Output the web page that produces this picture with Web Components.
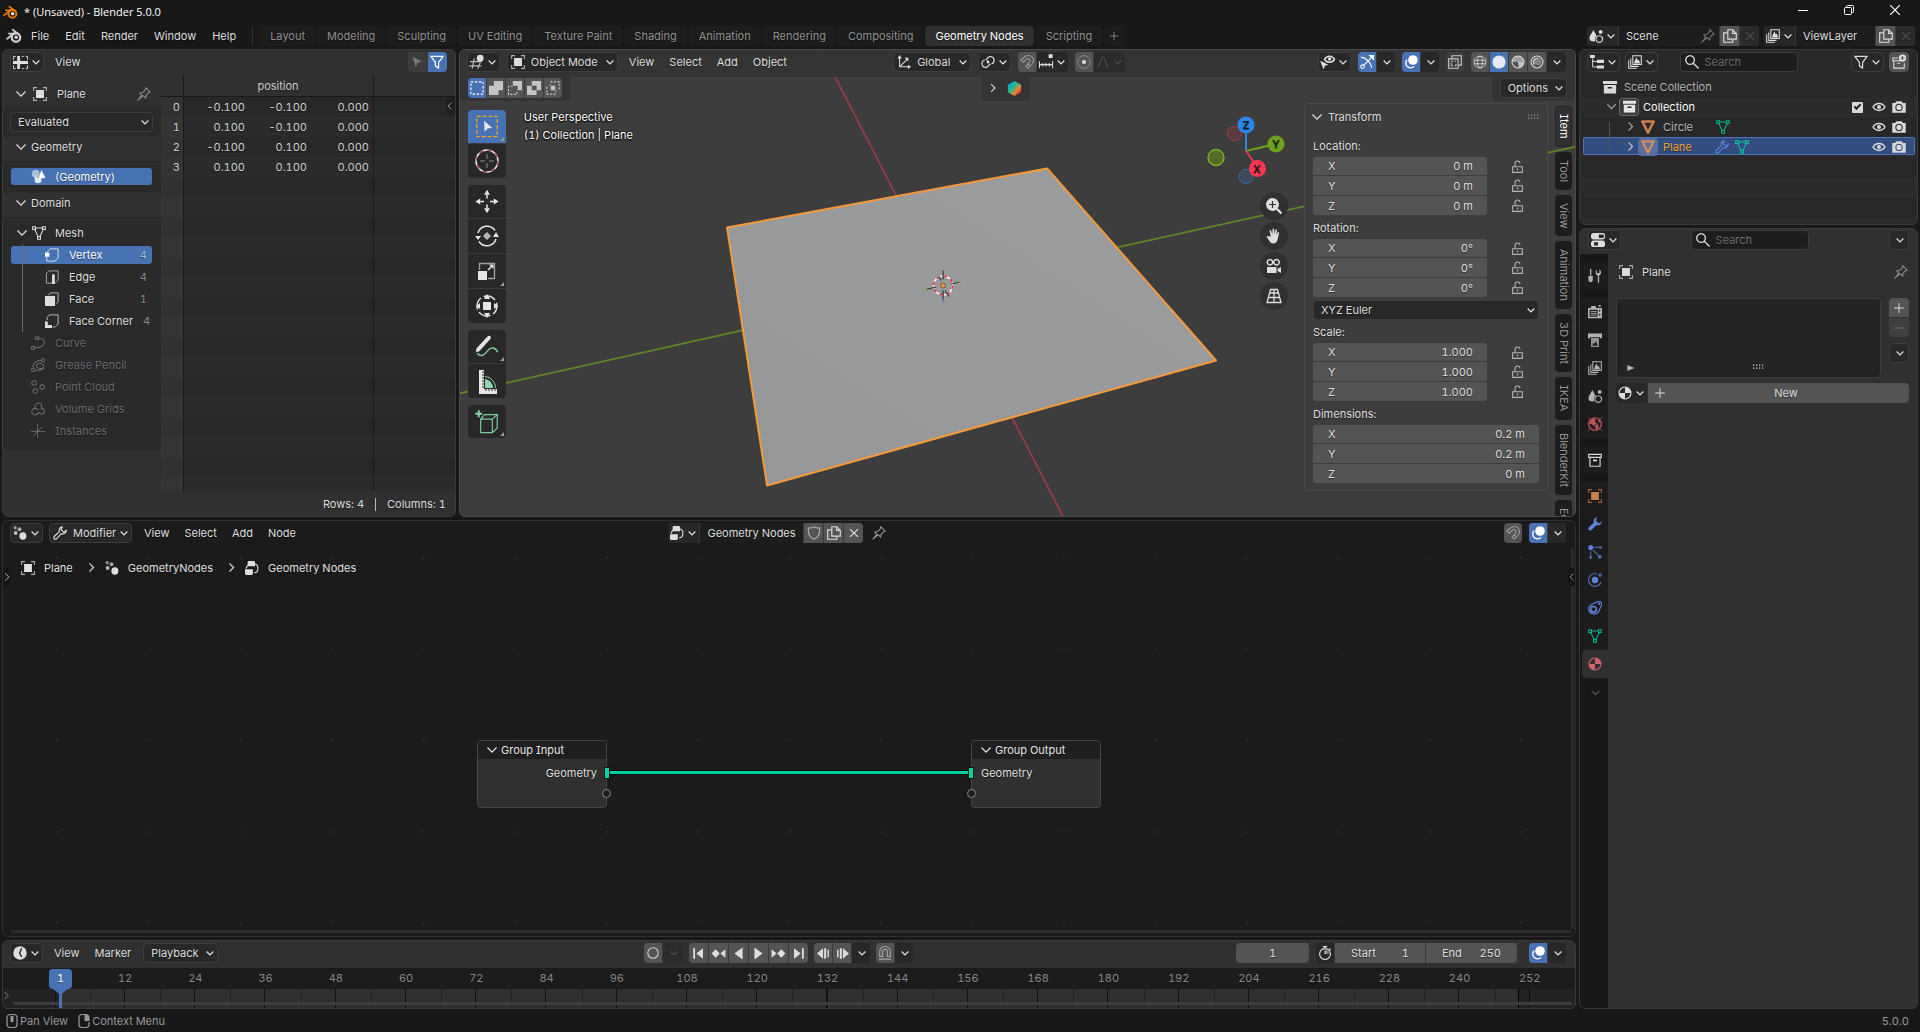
<!DOCTYPE html>
<html lang="en">
<head>
<meta charset="utf-8">
<title>* (Unsaved) - Blender 5.0.0</title>
<style>
html,body{margin:0;height:100%;background:#181818}
body{font:11px/16px Inter,"Liberation Sans",sans-serif;font-feature-settings:"tnum","cv08";color:#dedede;overflow:hidden}
</style>
</head>
<body>
<blender-window></blender-window>
<script>
const BASE = `
:host{display:block;box-sizing:border-box}
*,*::before,*::after{box-sizing:border-box}
button,input,select{font:inherit;font-feature-settings:inherit;color:inherit;margin:0;padding:0;border:0;background:none;outline:0;text-shadow:inherit}
a{color:inherit;text-decoration:none}
.grow{flex:1}
`;
const EDITOR = BASE + `
:host{display:flex;flex-direction:column;min-width:0;min-height:0;border:1px solid #3a3a3a;border-radius:6px;overflow:hidden;background:#303030;position:relative;text-shadow:0 1px 1px #0007}
header{display:flex;align-items:center;height:24px;flex:none;padding:0 8px 0 7px;position:relative}
.menus{display:flex;padding-left:12px;gap:15px}
`;
function define(name, css, html) {
  const tpl = document.createElement('template');
  customElements.define(name, class extends HTMLElement {
    connectedCallback() {
      if (this.shadowRoot) return;
      tpl.innerHTML = `<style>${css}</style>${typeof html === 'function' ? html(this) : html}`;
      this.attachShadow({mode:'open'}).append(tpl.content.cloneNode(true));
    }
  });
}

/* ---------- icons: 16 x 16 grid, drawn in currentColor ---------- */
const S = (d, w = 1.2, extra = '') => `<path d="${d}" fill="none" stroke="currentColor" stroke-width="${w}" ${extra}/>`;
const F = (d, extra = '') => `<path d="${d}" fill="currentColor" ${extra}/>`;
const DIAL = 'M8 1.2a6.8 6.8 0 1 0 0 13.6a6.8 6.8 0 1 0 0-13.6';
const ICONS = {
  blender: S('M1.2 10.8L8 5.2M3 5.6h6.5M6.8 1.8l6 4.6',1.8,'stroke-linecap="round"')+`<circle cx="10" cy="9.4" r="4.2" fill="none" stroke="currentColor" stroke-width="2.2"/><circle cx="10.2" cy="9.2" r="1.8" fill="var(--eye,currentColor)"/>`,
  down: S('M3.5 6l4.5 4.500 4.500-4.500',1.7),
  open: S('M3.5 5.5L8 10.2l4.500-4.700',1.2),
  right: S('M5.500 3l5 5-5 5',1.4),
  left: S('M10 3.5L5.500 8l4.500 4.500',1.3),
  plus: S('M8 1.500v13M1.500 8h13',1.3), minus: S('M3 8h10',1.2), cross: S('M3.500 3.500l9 9M12.500 3.500l-9 9',1.4),
  sheet: F('M4.500 1h3v14h-3zM0 6.500h16v3H0z')+S('M.5 5V1.500h2.500M9.500 1.500h2M13.500 1.500h2V5M.5 11v3.500h2.500M9.500 14.500h2M13.500 14.500h2V11',1),
  cursor: F('M3 2l10.500 5.500-5 1.500-2 5z'),
  funnel: S('M1 1.500h14L9.800 8.300v6.700l-3.600-2.500V8.300z',1.4,'stroke-linejoin="round"'),
  object: F('M3.500 3.500h9v9h-9z')+S('M.7 4.500V.7h3.800M11.500.7h3.800v3.800M15.300 11.500v3.800h-3.800M4.500 15.300H.7v-3.800',1.2,'opacity=".75"'),
  pin: S('M10 .8l5.200 5.200-2 .4-2.900 3.200-.3 3.200-3-3L1 15l4.500-5.500L3 6.800l3.600-.5 2.900-3.100z',1.2,'stroke-linejoin="round"'),
  geo: `<circle cx="5" cy="5" r="4.200" fill="currentColor" opacity=".55"/>`+F('M4 7.500c2 2 4 2 7 1v5c-1 2-6 2-7 0z','opacity=".85"')+F('M11 1l4.300 8c-1.500 1.300-6 1.300-7 0z'),
  mesh: S('M3.200 4l3.600 7.800M12.800 4l-3.600 7.800M4 2.300h8',1.2)+S('M.8.8h3.200v3.200H.8zM12 .8h3.200v3.200H12zM6.400 12h3.200v3.200H6.400z',1.3),
  vertex: S('M5.500 1h9.500v10.500L11.500 15h-9.500V10.500M2.500 4.500l3-3',1.1,'opacity=".8"')+F('M0 5h5v5H0z'),
  edge: S('M4.500 1H15v10.500L11.500 15H1.500V4z',1.1,'opacity=".7"')+F('M8 5h3.200v11H8z'),
  face: S('M4 3.500L6 1h9v10l-2 2.500',1.1,'opacity=".8"')+F('M0 4.500h11.500V16H0z'),
  corner: S('M2.500 7V4L5 1h10v10.500L11.500 15H9',1.1,'opacity=".8"')+F('M0 8.500h3.200v4h4.800V16H0z'),
  curve: S('M.8 12h3.200v3.200H.8zM5.500.8h3.200V4H5.500z',1.2)+S('M9 2.500c9 0 9 10.500-4.500 11',1.2),
  grease: S('M.8 12h3.200v3.200H.8zM12 .8h3.200V4H12z',1.1)+S('M2.500 11.500C1.500 5 8 2.500 12 2.500M4 13.700c11 2 13-6 8-7.500-4-1-7 2-5 4.500 2 2 7 2 8 1',1.2),
  points: S('M3.500.8a2.600 2.600 0 1 0 .01 0M12.800 5.500a2.600 2.600 0 1 0 .01 0M5 10a2.600 2.600 0 1 0 .01 0',1.3),
  cloud: S('M5 7a3.900 3.900 0 1 1 6.800 0c3.500 1 4.500 3 3 5.500-1.500 2-5 1-6-.5-1.500 3-5.500 3.500-7.500 1-1.200-2 .2-5.500 3.700-6M5 7c1 1.300 2.500 1.600 4 1',1.200),
  axes: S('M7.500 0v16M0 8.500h16M2.500 13.500L12.500 3.500',1.1),
  view3d: S('M0 7.500h13.500M-1 12.500H13M5 4L2.500 15.500M11.500 9l-2.500 6.500',1.4,'opacity=".8"')+`<circle cx="11.600" cy="3.600" r="3.900" fill="currentColor"/>`,
  orient: S('M3 2.500v11H13.500M3 13.500L12 4.500',1.200)+F('M.5 4L3 0l2.500 4zM12.500 11l3.500 2.500-3.500 2.500zM8.500 3H13v4.500z'),
  link: S('M6.800 4.500a4.300 4.300 0 1 1 5 5.800M9.200 11.500a4.300 4.300 0 1 1-5-5.800M6.800 4.500L5.400 6M9.200 11.500l1.400-1.500',1.400)+`<circle cx="8" cy="8" r="1.600" fill="currentColor"/>`,
  magnet: S('M1 5.500L6 1.800C12.500-2 18 4.500 14 10l-4.500 5.200-2.700-2.400L11 8C12.500 5 9.800 3.200 7.800 4.600L3.500 8.200zM9 10.200l2.700 2.300',1.3),
  snapinc: F('M11 -1h4.500v4.500H11z')+S('M.5 7v8M15.500 7v8M.5 11h15M4.300 9v4M8 9v4M11.700 9v4',1.200),
  prop: S('M8 .8a7.200 7.200 0 1 0 .01 0',1,'opacity=".45"')+`<circle cx="8" cy="8" r="2.400" fill="currentColor"/>`,
  falloff: S('M1 14c5 0 4-12 7-12s2 12 7 12',1.300),
  eyecur: S('M4 5c2.500-4.800 9-4.800 11.500 0-2.500 4.300-9 4.300-11.500 0z',1.600)+`<circle cx="9.800" cy="4.700" r="2" fill="currentColor"/>`+F('M-1 6.500l9.500 4.700-4 1-1.500 4.300z'),
  gizmo: S('M1 2.500c6 .5 11 5.500 12.500 12M4.300 11.800L13 3',1.3)+F('M9.500 0H16v6.500z')+S('M2.800 11.300a2 2 0 1 0 .01 0',1.2),
  overlay: `<circle cx="10.300" cy="5.700" r="5.500" fill="currentColor"/>`+S('M3.500 5.500A5.200 5.200 0 1 0 11.500 13',1.600),
  xray: S('M4.500 4V.8h10.700v10.700H12M.8 4.500h10.700v10.700H.8z',1.3)+S('M3.500 7.200H6M8 7.200h1.200M3.700 9v3.200H6M8 12.200h1.200v-2',1.1),
  wire: S(DIAL+'M1.500 6h13M1.500 10h13M8 1.200C4 4 4 12 8 14.800 12 12 12 4 8 1.200',1.1,'opacity=".85"'),
  solid: `<circle cx="8" cy="8" r="7.500" fill="currentColor" opacity=".85"/>`,
  matprev: S(DIAL,1.2)+F('M8 8V1.500A6.500 6.500 0 0 1 14.500 8zM8 8H1.500A6.500 6.500 0 0 1 8 1.500z','opacity=".55"')+F('M8 8h6.500A6.500 6.500 0 0 1 9 14.400z','opacity=".8"'),
  rendered: S(DIAL,1.2)+F('M8 3a5 5 0 0 1 4.500 7.500L11 12 4 10C2.500 6 5 3 8 3z','opacity=".35"')+S('M4.500 11c-2-4 1-7.500 4.500-7',1.3),
  material: S(DIAL,1.3)+F('M8 8V1.500A6.500 6.500 0 0 1 14.500 8zM8 8v6.500A6.500 6.500 0 0 1 1.500 8z'),
  selset: S('M1 1h14v14H1z',1.3,'stroke-dasharray="2.800 1.867"'),
  seladd: F('M5.500 0H16v10.500h-5V16H0V5.500h5.500z'), 
  selsub: F('M5.500 0H16v10.500h-5v-5H5.500z')+S('M5.500 6H.7v9.300h9.500V11',1.3,'stroke-dasharray="2.500 1.500"'),
  selxor: F('M5.500 0H16v10.500h-5V16H0V5.500h5.500zM5.500 5.500v5H11v-5z','fill-rule="evenodd"'),
  seland: F('M5.500 5.500h5v5h-5z')+S('M5 1h10v10M11 15H1V5',1.3,'stroke-dasharray="2.500 1.500"')+S('M3.500 4.500h2M10.500 11.500h2',1),
  scene: F('M5 1c2 4 4.500 6.500 4.500 9.500 0 5-9 5-9 0C.5 7.500 3 5 5 1z')+`<circle cx="13.300" cy="3.300" r="2.200" fill="currentColor"/>`+`<circle cx="11.700" cy="11.500" r="5" fill="var(--bg,#282828)"/>`+S('M11.700 7.700a3.800 3.800 0 1 0 .01 0',1.3),
  layers: S('M5.500.8h9.700v10H5.500zM3.200 4v9H12M.8 6v9.200H10',1.200)+F('M6.500 9.700l3-7 1.700 3.500 1-1 1.800 4.500z'),
  copy: S('M5.500.8H11l4.200 4.200v6.500H5.500zM11 .8V5h4.200',1.3)+S('M5 4.500H.8v10.700h10.400v-3',1.3),
  outliner: F('M0 0h5.500v3.500H0zM8 5.500h8V9H8zM8 12h8v3.500H8z')+S('M3 4v9.700h5M3 7.300h5',1.100),
  search: S('M5.800.8a5 5 0 1 0 .01 0M9.500 9.500l6 6',1.500),
  newcol: S('M7 3.500H1V6.500H10M2 6.500V15h12V9.500M6 9.500h3.500',1.200)+`<circle cx="12" cy="3.500" r="4.200" fill="currentColor"/>`+`<path d="M12 1.200v4.600M9.700 3.500h4.600" stroke="#545454" stroke-width="1.200"/>`,
  collection: F('M0 1h16v3.500H0zM1 5.700h14V15.500H1z')+`<path d="M5.500 8h5v1.800h-5z" fill="#282828"/>`,
  archive: S('M.8 1.500h14.400v3.500H.8zM2.200 5.500v9.700h11.600V5.500',1.3)+F('M5.700 7.500h4.600v2H5.700z'),
  eye: S('M1.200 8c3-5.500 10.600-5.500 13.600 0-3 5.200-10.600 5.200-13.600 0z',1.700)+`<circle cx="8" cy="8" r="2.300" fill="currentColor"/>`,
  camera: F('M.3 3.500h3.200L5 1.500h6l1.500 2h3.200v11H.3z')+`<circle cx="8" cy="8.500" r="3.600" fill="none" stroke="var(--bg,#282828)" stroke-width="1.200"/>`,
  tri: `<path d="M1.500 1.700h13L8 14.500z" fill="none" stroke="currentColor" stroke-width="2.900" stroke-linejoin="round"/>`,
  wrench: S('M10.700 1c-3.500.5-4.300 3.200-3.400 5.500L1.300 12c-1.300 2 .7 4 2.600 2.600L9.500 8.700c2.800.8 5.700-.5 5.900-4L12.300 7 9 4z',1.3,'stroke-linejoin="round"'),
  wrenchF: F('M10.500.3c-3.800.5-4.600 3.500-3.700 6L.7 12c-1.300 2.300 1.200 4.500 3 3L9.500 9.300c3.300.8 6-.5 6.300-4.800L12.500 7.300 8.800 4z'),
  props: `<rect x="0" y="0" width="16" height="7.300" rx="3" fill="currentColor"/><rect x="0" y="8.700" width="16" height="7.300" rx="3" fill="currentColor"/><path d="M9 1.700h4a1.500 1.500 0 0 1 0 4H9zM3.500 10.500H8v3.700H3.500z" fill="#282828"/>`,
  tools: F('M2.300 0h1.500v7.500H2.300zM.5 8h5v4c0 4-5 4-5 0zM11.200 7.500C8.300 6.300 7.800 2.500 10 .5v4h3V.5c2.700 1.300 2.600 5.500-.3 7v7.300c0 1.600-1.500 1.600-1.500 0z'),
  render: F('M0 3.500h3L4 1h4.500l1 2.500H16V15H0zM1.800 5.500v8H11v-8zM12.700 5.500v2.200H14V5.500zM12.700 10v2.200H14V10zM12 0h2.500v2H12z','fill-rule="evenodd"')+S('M3 7.500h7M3 9.500h7M3 11.500h7',1),
  output: F('M0 .5h16V6h-2.500V4.500h-11V6H0z')+F('M3.500 5.500h9V16h-9zM4.800 14.500h6.400L9 9.500 7.500 12.200 6.500 11z','fill-rule="evenodd" opacity=".8"'),
  world: S('M8 .8a7.200 7.200 0 1 0 .01 0',1.300)+F('M2 5.500l3.500-4 3.500 1-1.200 3.500 2.400 1-3.700 3.500-2-2.200L1 7.500zM9.500 8l3 1-1 3.500-2.500 2-1-3.500zM11.500 2.500l3 3-2.500 1z')+S('M0 .5l2.500 2.500M16 .5L13.500 3M0 15.500L2.500 13M16 15.500L13.500 13',1),
  particles: `<circle cx="3.200" cy="2.800" r="2.900" fill="currentColor"/><circle cx="14.200" cy="2.800" r="1.600" fill="currentColor" opacity=".7"/><circle cx="3" cy="14.200" r="1.700" fill="currentColor" opacity=".7"/><circle cx="13.500" cy="13.500" r="2.200" fill="currentColor" opacity=".8"/>`+S('M7 2.800h6M3 7v6M6 6l6.500 6.500',1.4,'opacity=".7"'),
  physics: `<circle cx="8" cy="8" r="3.600" fill="currentColor"/><circle cx="13.800" cy="2.300" r="2.100" fill="currentColor" opacity=".7"/>`+S('M10.500 1A7.300 7.300 0 1 0 12 14M12 14A7.300 7.300 0 0 0 15 10',1.200,'opacity=".8"'),
  constraint: S('M11 1c3-1.200 5.300 1 4.300 4l-3.200 7.200c-3 5-11.500 2.500-11.200-3.500.2-2.500 1.700-4 3.500-5z',1.4)+S('M6.300 6.200a3.300 3.300 0 1 0 .01 0',1.9)+`<circle cx="12.700" cy="3.300" r="1.200" fill="currentColor"/>`,
  modnodes: `<circle cx="2.500" cy="2" r="1.900" fill="currentColor" opacity=".6"/><circle cx="7.500" cy="3.700" r="2.200" fill="currentColor" opacity=".7"/><circle cx="3" cy="8" r="2.200" fill="currentColor" opacity=".8"/><ellipse cx="11.300" cy="11.500" rx="4" ry="4.300" fill="currentColor"/>`,
  nodetree: F('M4.500 0H10q1.500 0 1.500 1.500V6H3V1.500Q3 0 4.500 0zM0 9.500h9V14q0 2-1.500 2h-6Q0 16 0 14z')+S('M11.500 3.500c4.500 0 4.500 10-1 10M3 5L1 8.500',1.300),
  shield: S('M8 .8c2 1.200 4.500 1.700 6.500 1.700 0 7-1 10-6.500 12.700-5.500-2.700-6.500-5.700-6.500-12.700 2 0 4.500-.5 6.500-1.700z',1.4),
  clock: `<circle cx="8" cy="8" r="7.700" fill="currentColor"/><path d="M10 2.500L7.500 8l2.500 4.500" stroke="#282828" stroke-width="1.600" fill="none"/>`,
  rec: S('M8 2a6 6 0 1 0 .01 0',1.4,'opacity=".8"'),
  first: F('M1.500 1.500h2.300v13H1.500zM13.500 1.500v13L5.300 8z'), last: F('M12.200 1.500h2.300v13h-2.300zM2.500 1.500v13L10.700 8z'),
  prevkey: F('M9.500 8L4.500 2.800-.5 8l5 5.200zM16.500 2.800v10.400L10.300 8z'), nextkey: F('M6.500 8l5-5.200 5 5.200-5 5.200zM-.5 2.800v10.400L5.700 8z'),
  playrev: F('M13 .5v15L3 8z'), play: F('M3 .5v15L13 8z'),
  stepb: F('M7.500 1.500v13L0 8zM8.800 1.500h2.500v13H8.800zM13 3.500h1.700v9H13z'), stepf: F('M8.500 1.500v13L16 8zM4.700 1.500h2.500v13H4.700zM1.300 3.500H3v9H1.300z'),
  snap2: S('M2 12V6.500a6 6 0 0 1 12 0V12h-3.300V6.500a2.700 2.700 0 0 0-5.400 0V12z',1.2)+S('M1 15h14',1.2),
  stopwatch: S('M8 3a6.200 6.200 0 1 0 .01 0M5.500.7h5M8 .7V3M13 3l1.500 1.500M8 9V5.500',1.3)+F('M8 9V4.500A4.500 4.500 0 0 1 12.500 9z','opacity=".5"'),
  lock: S('M2 8.200h12v7H2zM5 8V4.500C5 .2 11 .2 11 4',1.3)+F('M7.200 10.500h1.600v2.200H7.200z'),
  mouseM: S('M3 4.500a3 3 0 0 1 3-3h4a3 3 0 0 1 3 3v7a3 3 0 0 1-3 3H6a3 3 0 0 1-3-3z',1.2)+F('M6.500 3h3v6h-3z'),
  mouseR: S('M10 1.500H6a3 3 0 0 0-3 3v7a3 3 0 0 0 3 3h4a3 3 0 0 0 3-3V9',1.2)+F('M8.500 1H10a3.500 3.500 0 0 1 3.500 3.500V8h-5z'),
  zoom: `<circle cx="6.500" cy="6.500" r="6.500" fill="currentColor"/><path d="M6.500 3v7M3 6.500h7" stroke="#303030" stroke-width="1.200"/>`+S('M10.500 10.500l5 5',2.300),
  hand: F('M4.800 8.500L3.600 3c-.2-1.300 1.200-1.500 1.500-.4L6.300 6.500 6.500 1.300c.1-1.200 1.600-1.200 1.700 0l.3 5 1-4.300c.3-1.100 1.700-.8 1.500.4l-.6 4.800 1.300-2.700c.6-1 1.700-.5 1.400.6L11.500 12c-.7 2.300-2 3.500-4 3.500-2.500 0-3.500-1.500-4.500-3.200L.8 9.300c-.5-1 .5-1.700 1.400-1z'),
  cam: F('M1 9h9.500v6H1zM11.500 11L15 9v6l-3.500-2z')+S('M4 1.500a2.700 2.700 0 1 0 .01 0M10.500 1.500a2.700 2.700 0 1 0 .01 0',1.500),
  persp: S('M4.500 1.500h7L15 14.500H1zM8 1.500v13M3.700 5h8.600M2.500 9.500h11',1.3),
  grip: F('M3 5.500h1.200v1.200H3zM6 5.500h1.200v1.200H6zM9 5.500h1.200v1.200H9zM12 5.500h1.200v1.200H12zM3 8.500h1.200v1.200H3zM6 8.500h1.200v1.200H6zM9 8.500h1.200v1.200H9zM12 8.500h1.200v1.200H12z'),
  play2: F('M5 4.500v7L13 8z'),
  hex: `<defs><linearGradient id="h" x1="0" y1="0" x2="1" y2="1"><stop offset=".1" stop-color="#1aa3e8"/><stop offset=".4" stop-color="#19b98f"/><stop offset=".65" stop-color="#e08a3c"/><stop offset=".9" stop-color="#e81b1b"/></linearGradient></defs><path d="M8 0l7 4v8l-7 4-7-4V4z" fill="url(#h)"/>`
};
define('bl-icon', `:host{display:inline-flex;flex:none;width:var(--size,16px);height:var(--size,16px)}svg{width:100%;height:100%;overflow:visible}`,
  el => `<svg viewBox="0 0 16 16" aria-hidden="true">${ICONS[el.getAttribute('name')] || ''}</svg>`);
const ic = (n, st = '') => `<bl-icon name="${n}" style="--size:14px;${st}"></bl-icon>`;

/* ---------- controls ---------- */
define('bl-button', BASE + `
:host{display:inline-flex;flex:none}
button{display:flex;align-items:center;justify-content:center;gap:2px;height:20px;min-width:20px;padding:0 2px;background:#282828;border:1px solid #3d3d3d;border-radius:4px;white-space:nowrap}
.text{padding:0 3px 0 5px}
.chev{--size:12px;margin-right:-1px}
:host([flat]) button{border:0;border-radius:0;width:var(--w,18px);min-width:0;padding:0}
:host([flat][menu][icon]) button{width:31px}
:host([tone=grey]) button{background:#545454;border-color:#545454}
:host([tone=blue]) button{background:#4772b3;color:#fff}
:host([tone=dim]) button{background:#2b2b2b;color:#4c4c4c}
:host([tone=half]) button{background:#3d3d3d}
`, el => {
  const i = el.getAttribute('icon'), m = el.hasAttribute('menu'), t = el.textContent.trim();
  return `<button type="button" aria-label="${el.getAttribute('label') || t}">${i ? `<bl-icon name="${i}" style="--size:${el.getAttribute('isize') || 14}px"></bl-icon>` : ''}${t ? `<span class="text"><slot></slot></span>` : ''}${m ? '<bl-icon class="chev" name="down"></bl-icon>' : ''}</button>`;
});
define('bl-group', `:host{display:inline-flex;flex:none;gap:1px;height:20px;border-radius:4px;overflow:hidden;background:#3a3a3a}`, '<slot></slot>');
define('bl-select', BASE + `
:host{display:inline-flex;flex:none}
label{display:flex;flex:1;align-items:center;height:20px;background:#282828;border:1px solid #3d3d3d;border-radius:4px;padding:0 1px 0 3px;position:relative}
select{appearance:none;flex:1;height:18px;padding:0 18px 0 4px}
bl-icon+select{padding-left:6px}
:host([tight]) select{padding-right:13px}
option{background:#282828}
.c{--size:12px;position:absolute;right:1px;pointer-events:none}
`, el => `<label>${el.hasAttribute('icon') ? ic(el.getAttribute('icon')) : ''}<select aria-label="${el.getAttribute('label')}"><option>${el.getAttribute('value')}</option></select><bl-icon class="c" name="down"></bl-icon></label>`);
define('bl-search', BASE + `
:host{display:inline-flex;flex:none}
label{display:flex;align-items:center;width:118px;height:20px;background:#1d1d1d;border:1px solid #3d3d3d;border-radius:4px;padding-left:4px;gap:6px}
input{width:80px;height:18px}input::placeholder{color:#6e6e6e;opacity:1}
`, `<label>${ic('search')}<input type="search" placeholder="Search" aria-label="Search"></label>`);

/* A stack of labelled number fields, with an optional lock beside each. */
define('bl-vector', BASE + `
:host{display:flex;flex-direction:column}
h4{font:inherit;margin:0;line-height:20px;height:21px}
.line{display:flex;align-items:center;height:19px;margin-bottom:1px}
.line:nth-of-type(1){height:18px}
.line:last-child{margin-bottom:0}
label{flex:1;display:flex;align-items:center;height:100%;background:#545454;padding:0 14px 0 15px}
.line:nth-of-type(1) label{border-radius:4px 4px 0 0}.line:last-child label{border-radius:0 0 4px 4px}
input{flex:1;min-width:0;width:20px;text-align:right;height:18px}
button{width:14px;height:18px;margin:0 14px 0 24px;color:#b4b4b4;display:flex;align-items:center}
`, el => `<h4>${el.getAttribute('label')}:</h4>` + el.getAttribute('values').split(',').map((v, i) =>
  `<div class="line"><label><span>${'XYZ'[i]}</span><input value="${v}"></label>${el.hasAttribute('locks') ? `<button type="button" aria-label="Lock ${'XYZ'[i]}">${ic('lock','--size:13px')}</button>` : ''}</div>`).join(''));

/* ---------- window chrome ---------- */
define('title-bar', BASE + `
:host{display:flex;align-items:center;height:24px;padding:0 14px 0 3px;font:11px/16px "Open Sans","Noto Sans",sans-serif;color:#fff}
.logo{--size:15px;color:#ea7600;--eye:#fff;margin-right:6px}
button{width:46px;height:20px;display:flex;align-items:center;justify-content:center}
nav{display:flex;margin-right:-12px;margin-top:-4px}
`, `<bl-icon class="logo" name="blender"></bl-icon><span>* (Unsaved) - Blender 5.0.0</span><span class="grow"></span>
<nav><button aria-label="Minimize"><svg width="10" height="10"><path d="M0 5.500h10" stroke="#fff"/></svg></button>
<button aria-label="Restore"><svg width="10" height="10" fill="none" stroke="#fff"><rect x=".5" y="2.500" width="7" height="7" rx="1"/><path d="M2.500 2.500V1.500q0-1 1-1h5q1 0 1 1v5q0 1-1 1h-1"/></svg></button>
<button aria-label="Close"><svg width="10" height="10"><path d="M0 0l10 10M10 0L0 10" stroke="#fff" stroke-width="1.200"/></svg></button></nav>`);

define('top-bar', BASE + `
:host{display:flex;align-items:center;height:25px;padding:0 5px 1px 6px;text-shadow:0 1px 1px #0007}
.logo{--size:16px;color:#d0d0d0;margin-right:9px}
.menus{display:flex;gap:16px}
hr{width:1px;height:20px;border:0;background:#303030;margin:0 7px 0 16px}
.tabs{display:flex;gap:2px}
.tabs button{height:20px;padding:0 10px;border-radius:4px;background:#1c1c1c;color:#8f8f8f;text-shadow:inherit}
.tabs button[aria-selected=true]{background:#303030;color:#fff}
.tabs .add{padding:0 5px;display:flex;align-items:center}
.id{margin-left:5px}
.name{display:flex;align-items:center;background:#1d1d1d;padding:0 4px 0 7px;--bg:#1d1d1d}
.name input{width:75px}.name.s input{width:68px}
bl-icon{color:#d9d9d9}
`, `<bl-icon class="logo" name="blender"></bl-icon>
<nav class="menus">${['File','Edit','Render','Window','Help'].map(t => `<a href="#">${t}</a>`).join('')}</nav><hr>
<div class="tabs" role="tablist">${['Layout','Modeling','Sculpting','UV Editing','Texture Paint','Shading','Animation','Rendering','Compositing','Geometry Nodes','Scripting'].map(t => `<button role="tab" aria-selected="${t === 'Geometry Nodes'}">${t}</button>`).join('')}<button class="add" aria-label="Add workspace">${ic('plus','color:#8f8f8f;--size:10px')}</button></div>
<span class="grow"></span>
<bl-group class="id"><bl-button flat icon="scene" menu label="Scene"></bl-button><span class="name"><input value="Scene" aria-label="Scene name">${ic('pin','color:#777')}</span><bl-button flat tone="grey" icon="copy" label="New scene" style="--w:19px"></bl-button><bl-button flat tone="dim" icon="cross" label="Remove scene" style="--w:19px"></bl-button></bl-group>
<bl-group class="id"><bl-button flat icon="layers" menu label="View layer"></bl-button><span class="name s"><input value="ViewLayer" aria-label="View layer name"></span><bl-button flat tone="grey" icon="copy" label="New view layer" style="--w:19px"></bl-button><bl-button flat tone="dim" icon="cross" label="Remove view layer" style="--w:19px"></bl-button></bl-group>`);

define('status-bar', BASE + `
:host{display:flex;align-items:center;height:23px;padding:0 11px 0 4px;color:#999}
bl-icon{color:#999}.b{margin-left:8px}
`, `<bl-icon name="mouseM"></bl-icon><span>Pan View</span><bl-icon class="b" name="mouseR"></bl-icon><span>Context Menu</span><span class="grow"></span><span>5.0.0</span>`);

/* ---------- spreadsheet ---------- */
const tree = [['vertex','Vertex',4],['edge','Edge',4],['face','Face',1],['corner','Face Corner',4]];
const off = [['curve','Curve'],['grease','Grease Pencil'],['points','Point Cloud'],['cloud','Volume Grids'],['axes','Instances']];
const verts = [['-0.100','-0.100','0.000'],['0.100','-0.100','0.000'],['-0.100','0.100','0.000'],['0.100','0.100','0.000']];
define('spreadsheet-editor', EDITOR + `
header{height:25px;padding-bottom:1px}
header .menus{padding-left:11px}
main{flex:1;display:flex;min-height:0}
aside{width:158px;flex:none}
.head{height:24px;display:flex;align-items:center;gap:2px;padding:0 10px 4px;width:100%;text-align:left}
.head.top{height:32px;padding:5px 10px 0;gap:10px}
.body{background:#2a2a2a;padding:5px 8px 5px 7px;display:flex;flex-direction:column}
.geo{margin:2px 1px 3px;height:17px;border-radius:3px;background:#4772b3;color:#fff;display:flex;align-items:center;gap:9px;padding-left:20px}
.item{display:flex;align-items:center;gap:10px;height:18px;margin:2px 1px;border-radius:3px;white-space:nowrap}
.tree{border-radius:0 0 4px 4px;padding-bottom:8px}
.sub,.off{display:flex;flex-direction:column}
.sub{position:relative}
.sub::before{content:"";position:absolute;left:12px;top:0;bottom:0;width:1px;background:#6a6a6a}
.sub .item{padding-left:34px}
.sub .item b{font-weight:400;margin-left:auto;padding-right:5px;color:#8a8a8a}
.sub .on{background:#4772b3;color:#fff}.sub .on b{color:#aabbdb}
.off .item{padding-left:20px;color:#6b6b6b}
.sheet{flex:1;display:flex;flex-direction:column;position:relative;min-width:0}
.grid{flex:1;background:linear-gradient(90deg,#ffffff0c 22px,#1a1a1a 22px 23px,#0000 23px 212px,#1a1a1a 212px 213px,#0000 213px),repeating-linear-gradient(#282828 0 20px,#2b2b2b 20px 40px);background-position:0 0,0 22px}
table{border-collapse:collapse;table-layout:fixed;width:212px;text-align:right;line-height:20px;color:#cfcfcf;position:relative}
th{font-weight:400;padding:0}td{padding:0;height:20px}
tbody th{padding-right:3px}
tbody td:last-child{padding-right:4px}
thead tr{height:22px}thead th:last-child{text-align:center}
.bar{position:absolute;left:0;right:0;top:0;height:22px;background:#303030;border-bottom:1px solid #1a1a1a}
.bar::before{content:"";position:absolute;inset:0;background:linear-gradient(90deg,#0000 22px,#1a1a1a 22px 23px,#0000 23px 212px,#1a1a1a 212px 213px,#0000 213px)}
.peek{position:absolute;right:0;top:22px;width:9px;height:18px;background:#1f1f1f;border-radius:4px 0 0 4px;display:flex;align-items:center;justify-content:center;color:#999}
footer{height:25px;display:flex;align-items:center;justify-content:flex-end;padding:2px 9px 0 0;flex:none}
footer i{width:1px;height:13px;background:#bbb;margin:0 11px}
`, `<header><bl-button icon="sheet" isize="15" menu label="Editor type"></bl-button><nav class="menus"><a href="#">View</a></nav><span class="grow"></span>
<bl-group><bl-button flat tone="half" icon="cursor" label="Selected only" style="--w:19px;color:#777"></bl-button><bl-button flat tone="blue" icon="funnel" label="Filter" style="--w:19px"></bl-button></bl-group></header>
<main><aside>
<div class="head top">${ic('open','--size:16px;margin-right:-6px')}${ic('object')}<span>Plane</span><span class="grow"></span>${ic('pin','color:#8f8f8f')}</div>
<div class="body"><bl-select label="Evaluation state" value="Evaluated"></bl-select></div>
<button class="head">${ic('open','--size:16px')}<span>Geometry</span></button>
<div class="body"><button class="geo">${ic('geo','--size:15px')}<span>(Geometry)</span></button></div>
<button class="head">${ic('open','--size:16px')}<span>Domain</span></button>
<div class="body tree"><button class="item" style="gap:2px;padding-left:3px">${ic('open','--size:16px')}${ic('mesh','margin-right:7px')}<span>Mesh</span></button>
<div class="sub">${tree.map(([i,t,n],k) => `<button class="item ${k ? '' : 'on'}">${ic(i)}<span>${t}</span><b>${n}</b></button>`).join('')}</div>
<div class="off">${off.map(([i,t]) => `<button class="item">${ic(i)}<span>${t}</span></button>`).join('')}</div></div>
</aside>
<div class="sheet"><div class="grid"><div class="bar"></div><table><colgroup><col style="width:22px"><col style="width:62px"><col style="width:62px"><col style="width:66px"></colgroup>
<thead><tr><th></th><th colspan="3">position</th></tr></thead>
<tbody>${verts.map((r,i) => `<tr><th>${i}</th>${r.map(c => `<td>${c}</td>`).join('')}</tr>`).join('')}</tbody></table></div>
<button class="peek" aria-label="Show sidebar">${ic('left','--size:12px')}</button>
<footer><span>Rows: 4</span><i></i><span>Columns: 1</span></footer></div></main>`);

/* ---------- 3D viewport ---------- */
const TOOLS = {
  select: '<rect x="6.500" y="6.500" width="21" height="21" fill="none" stroke="#f5a623" stroke-width="1.300" stroke-dasharray="4 2"/><path d="M14 11l8.500 7.500-5 .5-3 3.500z" fill="#e6e6e6"/>',
  cursor: '<circle cx="17" cy="17" r="11" fill="none" stroke="#e6e6e6" stroke-width="1.500"/><circle cx="17" cy="17" r="11" fill="none" stroke="#a3464a" stroke-width="1.500" stroke-dasharray="4.320 4.320"/><path d="M17 10v5M17 19v5M10 17h5M19 17h5" stroke="#8c8c8c"/>',
  move: '<path d="M17 5l3 5h-6zM17 29l3-5h-6zM5 17l5-3v6zM29 17l-5-3v6z" fill="#e6e6e6"/><path d="M17 10v4M17 20v4M10 17h4M20 17h4" stroke="#e6e6e6" stroke-width="1.600"/>',
  rotate: '<path d="M8 14a9.500 9.500 0 0 1 17-2.500M26 20a9.500 9.500 0 0 1-17 2.500" fill="none" stroke="#e6e6e6" stroke-width="1.500"/><path d="M5 17h6l-3 4zM23 18h6l-3-5z" fill="#e6e6e6"/><path d="M17 13l4 4-4 4-4-4z" fill="#b5b5b5"/>',
  scale: '<path d="M9.500 16V9.500h15v15H18" fill="none" stroke="#a0a0a0" stroke-width="1.300"/><path d="M8 17h9v9H8z" fill="#e6e6e6"/><path d="M18 16l4-4" stroke="#e6e6e6" stroke-width="1.500"/><path d="M19 10.500h4.500V15z" fill="#e6e6e6"/>',
  transform: '<circle cx="17" cy="17" r="10" fill="none" stroke="#e6e6e6" stroke-width="1.400" stroke-dasharray="9 3 3.700 0"/><path d="M13 13h8v8h-8zM17 5l3 5h-6zM17 29l3-5h-6zM6 17l4-3v6zM28 17l-4-3v6z" fill="#e6e6e6"/>',
  annotate: '<path d="M8 20L19 8" stroke="#e6e6e6" stroke-width="4" stroke-linecap="round"/><path d="M5.500 23l1-4 3 2.500z" fill="#e6e6e6"/><path d="M7 24c4 5 8 1 11-3s8-3 10 2" fill="none" stroke="#7fc9a0" stroke-width="1.500"/>',
  measure: '<path d="M9 6h5v19h13v5H9z" fill="#e6e6e6"/><path d="M12 8h2M12 11h2M12 14h2M12 17h2M12 20h2M12 23h2M16 27v-2M19 27v-2M22 27v-2M25 27v-2" stroke="#282828"/><path d="M15 15a9 9 0 0 1 8 9h-8z" fill="#8ed7b0"/><path d="M15 12.500a11.500 11.500 0 0 1 10.500 11.500" stroke="#8ed7b0" fill="none"/>',
  cube: '<path d="M10.500 14.500h12v14h-12zM10.500 14.500l4-4.500h13l-5 4.500M27.500 10v14l-5 4.500" fill="none" stroke="#7fc9a0" stroke-width="1.200"/><path d="M8.500 5.500v7M5 9h7" stroke="#8ed7b0" stroke-width="2"/>'
};
define('tool-button', BASE + `
button{display:block;width:38px;height:34px;background:#282828;position:relative;overflow:hidden}
:host(:first-child) button{height:33px}
:host([on]) button{background:#4772b3}
:host([more]) button::after{content:"";position:absolute;right:2px;bottom:2px;border:2px solid;border-color:#0000 #999 #999 #0000}
svg{width:34px;height:100%;margin:0 2px;display:block}
`, el => `<button type="button" aria-label="${el.getAttribute('tool')}"><svg viewBox="0 0 34 34">${TOOLS[el.getAttribute('tool')]}</svg></button>`);

define('transform-panel', BASE + `
:host{width:244px;border:1px solid #4a4a4a;border-radius:4px;background:#3d3d3d;padding:0 8px 7px}
.t{display:flex;align-items:center;gap:3px;height:25px;width:100%;margin-bottom:7px;margin-left:-4px;text-align:left}
.t .g{margin-left:auto;color:#999;margin-right:-6px}
bl-vector{margin-bottom:3px}
bl-select{display:flex;margin-bottom:2px}
`, `<button class="t">${ic('open','--size:16px')}<span>Transform</span><bl-icon class="g" name="grip"></bl-icon></button>
<bl-vector label="Location" values="0 m,0 m,0 m" locks></bl-vector>
<bl-vector label="Rotation" values="0°,0°,0°" locks></bl-vector>
<bl-select label="Rotation mode" value="XYZ Euler"></bl-select>
<bl-vector label="Scale" values="1.000,1.000,1.000" locks></bl-vector>
<bl-vector label="Dimensions" values="0.2 m,0.2 m,0 m" style="margin-bottom:0"></bl-vector>`);

define('viewport-editor', EDITOR + `
:host{background:#3d3d3d;border-color:#4a4a4a}
.scene{position:absolute;inset:0;width:100%;height:100%}
header{height:27px;padding:0 9px 3px 7px;background:#333333d8;gap:7px}
header .menus{padding-left:4px;gap:15px}
.sp1{flex:100}.sp2{flex:194}
.strip{display:flex;position:relative;height:24px}
.strip>div{background:#333333d8;display:flex;align-items:center;border-radius:0 0 4px 4px;padding:0 8px 2px}
.strip .m{width:48px;justify-content:flex-end;gap:8px}
.s1{flex:412}.s2{flex:462}
.work{display:flex;position:relative;flex:1;min-height:0}
.tools{display:flex;flex-direction:column;gap:7px;margin:9px 18px 0 8px}
.tools div{display:flex;flex-direction:column;gap:1px;border-radius:4px;overflow:hidden;background:#3a3a3a}
.info{margin-top:7px;line-height:18px;color:#fff;text-shadow:0 0 2px #000,0 1px 2px #000}
.nav{display:flex;flex-direction:column;align-items:flex-end;gap:2px;margin:8px 16px 0 0}
.nav button{width:28px;height:28px;border-radius:50%;background:#303030;display:flex;align-items:center;justify-content:center}
.nav svg{margin-bottom:1px}
transform-panel{align-self:flex-start;margin-top:2px;flex:none}
.tabs{display:flex;flex-direction:column;gap:5px;margin:5px 3px 0 7px;overflow:hidden}
.tabs button{writing-mode:vertical-rl;width:17px;padding:8px 0;background:#1d1d1d;color:#999;border-radius:4px;flex:none;line-height:17px}
.tabs button.on{background:#303030;color:#fff;box-shadow:inset 0 0 0 1px #242424}
`, `<svg class="scene" viewBox="460 50 1115 467" preserveAspectRatio="xMidYMid slice"><defs><linearGradient id="p" x1="0" y1="1" x2="1" y2="0"><stop stop-color="#949698"/><stop offset="1" stop-color="#9c9d9f"/></linearGradient></defs>
<path d="M459 394L742 331M1117 248L1576 147" stroke="#5f8524" stroke-width="1.800"/><path d="M821 50L896 196M1012 418L1063 517" stroke="#993a48" stroke-width="1.800"/>
<path d="M1047 169L727 228 767 486 1216 361z" fill="url(#p)" stroke="#f5993a" stroke-width="2" stroke-linejoin="round"/>
<circle cx="943" cy="286" r="9.500" fill="none" stroke="#fff" stroke-width="1.500"/><circle cx="943" cy="286" r="9.500" fill="none" stroke="#e8303c" stroke-width="1.500" stroke-dasharray="3.730 3.730"/>
<path d="M943 271v9M943 291v9M926 290l10-2.500M951 284.500l9-2M939 277l2 4M945 291l4 6" stroke="#333" stroke-width="1.200"/><path d="M924 290.500l3-.7M958 282.800l3-.7" stroke="#6fb51b"/><path d="M943 300v3" stroke="#4a80d0"/><circle cx="943" cy="286" r="2.500" fill="#f5993a" stroke="#333" stroke-width=".6"/></svg>
<header><bl-button icon="view3d" menu label="Editor type"></bl-button><bl-select icon="object" label="Mode" value="Object Mode"></bl-select><nav class="menus"><a href="#">View</a><a href="#">Select</a><a href="#">Add</a><a href="#">Object</a></nav><span class="sp1"></span>
<bl-select icon="orient" label="Transform orientation" value="Global"></bl-select><bl-button icon="link" menu label="Pivot point"></bl-button>
<bl-group><bl-button flat tone="grey" icon="magnet" label="Snap" style="color:#999"></bl-button><bl-button flat icon="snapinc" menu label="Snap to"></bl-button></bl-group>
<bl-group><bl-button flat tone="grey" icon="prop" label="Proportional editing"></bl-button><bl-button flat tone="dim" icon="falloff" menu label="Falloff"></bl-button></bl-group>
<span class="sp2"></span><bl-button icon="eyecur" menu label="Visibility"></bl-button>
<bl-group><bl-button flat tone="blue" icon="gizmo" label="Gizmos"></bl-button><bl-button flat menu label="Gizmo settings"></bl-button></bl-group>
<bl-group><bl-button flat tone="blue" icon="overlay" label="Overlays"></bl-button><bl-button flat menu label="Overlay settings"></bl-button></bl-group>
<bl-group><bl-button flat tone="half" icon="xray" label="X-ray" style="color:#c8c8c8"></bl-button></bl-group>
<bl-group><bl-button flat tone="grey" icon="wire" label="Wireframe"></bl-button><bl-button flat tone="blue" icon="solid" label="Solid"></bl-button><bl-button flat tone="grey" icon="matprev" label="Material preview"></bl-button><bl-button flat tone="grey" icon="rendered" label="Rendered"></bl-button><bl-button flat menu label="Shading settings" style="--w:19px"></bl-button></bl-group></header>
<div class="strip"><div><bl-group><bl-button flat tone="blue" icon="selset" label="Set selection"></bl-button>${['seladd','selsub','selxor','seland'].map(i => `<bl-button flat tone="grey" icon="${i}" label="${i}" style="color:#c4c4c4"></bl-button>`).join('')}</bl-group></div><span class="s1"></span><div class="m">${ic('right','--size:12px;color:#fff')}${ic('hex','--size:15px')}</div><span class="s2"></span><div><bl-button menu>Options</bl-button></div></div>
<div class="work"><div class="tools"><div><tool-button tool="select" on more></tool-button><tool-button tool="cursor"></tool-button></div><div><tool-button tool="move"></tool-button><tool-button tool="rotate"></tool-button><tool-button tool="scale" more></tool-button><tool-button tool="transform"></tool-button></div><div><tool-button tool="annotate" more></tool-button><tool-button tool="measure"></tool-button></div><div><tool-button tool="cube" more></tool-button></div></div>
<div class="info">User Perspective<br>(1) Collection | Plane</div><span class="grow"></span>
<div class="nav"><svg width="86" height="80" viewBox="1202 109 86 80" font-family="Inter,sans-serif" font-size="11" font-weight="600" text-anchor="middle"><circle cx="1234.500" cy="133.500" r="7" fill="#5a3a40" stroke="#a63a4c"/><circle cx="1216" cy="157.500" r="8" fill="#556b2c" stroke="#7fb81a" stroke-width="1.300"/><circle cx="1246" cy="176.500" r="7" fill="#3c4a5c" stroke="#3a6cae"/><path d="M1246 151V130" stroke="#2f83e3" stroke-width="2"/><path d="M1246 151l25-6" stroke="#6fa21c" stroke-width="2"/><path d="M1246 151l9 13" stroke="#e8374f" stroke-width="2"/><circle cx="1246" cy="125" r="8.500" fill="#2c86ea"/><circle cx="1276" cy="144" r="8.500" fill="#6fa21c"/><circle cx="1257.500" cy="168.500" r="8.500" fill="#fb3851"/><g fill="#1b1b1b"><text x="1246" y="129">Z</text><text x="1276" y="148">Y</text><text x="1257" y="172.500">X</text></g></svg>
${['zoom','hand','cam','persp'].map(n => `<button aria-label="${n}">${ic(n,'--size:16px')}</button>`).join('')}</div>
<transform-panel></transform-panel>
<div class="tabs">${['Item','Tool','View','Animation','3D Print','IKEA','BlenderKit','Edit'].map((t,i) => `<button class="${i ? '' : 'on'}">${t}</button>`).join('')}</div></div>`);

/* ---------- node editor ---------- */
define('graph-node', BASE + `
:host{position:absolute;width:130px;height:68px;background:#303030;border:1px solid #454545;border-radius:4px}
h3{margin:0;font:inherit;height:18px;background:#1f1f1f;border-radius:3px 3px 0 0;display:flex;align-items:center;gap:1px;padding-left:6px;color:#e6e6e6}
p{margin:5px 9px 0;line-height:18px}
:host([side=out]) p{text-align:right}
i{position:absolute;left:-3px;top:27px;width:4px;height:10px;background:#00d6a3;box-shadow:0 0 0 1px #111}
u{position:absolute;left:-5px;bottom:9px;width:9px;height:9px;border:1px solid #8a8a8a;border-radius:50%;background:#1d1d1d}
:host([side=out]) i{left:auto;right:-3px}:host([side=out]) u{left:auto;right:-5px}
`, `<h3>${ic('open','--size:16px')}<slot></slot></h3><p>Geometry</p><i></i><u></u>`);
define('node-editor', EDITOR + `
:host{background:#1b1b1b;border-color:#2f2f2f}
.canvas{position:absolute;inset:0}.canvas svg{width:100%;height:100%}
header .menus{padding-left:12px}
header{padding-right:9px}
bl-select{margin-left:6px}
.name{background:#1d1d1d;display:flex;align-items:center}.name input{width:103px;text-align:center}
.crumbs{display:flex;align-items:center;margin:12px 0 0 18px;position:relative;height:22px;color:#e0e0e0}
.crumbs bl-icon{margin-right:9px}
.peek{position:absolute;left:0;top:47px;width:7px;height:18px;background:#151515;display:flex;align-items:center;justify-content:center;color:#999;border-radius:0 4px 4px 0}
.peek.r{left:auto;right:0;border-radius:4px 0 0 4px}
.h{position:absolute;left:8px;right:3px;bottom:3px;height:3px;background:#2c2c2c;border-radius:2px}
.v{position:absolute;right:1px;top:27px;bottom:7px;width:3px;background:#2c2c2c;border-radius:2px}
`, `<div class="canvas"><svg><defs><pattern id="g" x="45" y="27" width="91.500" height="91.500" patternUnits="userSpaceOnUse"><circle cx="9.500" cy="9.200" r="1" fill="#2e2e2e"/><path d="M27.500 9.200h1M46 9.200h1M64 9.200h1M82.500 9.200h1M9 27.500h1M9 46h1M9 64h1M9 82.500h1" stroke="#222"/></pattern></defs><rect width="100%" height="100%" fill="url(#g)"/><path d="M603 251.500h366" stroke="#0d0d0d" stroke-width="5"/><path d="M603 251.500h366" stroke="#00cf9e" stroke-width="3"/></svg>
<graph-node side="out" style="left:474px;top:219px">Group Input</graph-node><graph-node side="in" style="left:968px;top:219px">Group Output</graph-node>
<i class="h"></i><i class="v"></i></div>
<header><bl-button icon="modnodes" menu label="Editor type"></bl-button><bl-select tight icon="wrench" label="Node tree type" value="Modifier"></bl-select><nav class="menus"><a href="#">View</a><a href="#">Select</a><a href="#">Add</a><a href="#">Node</a></nav><span style="flex:372"></span>
<bl-group><bl-button flat icon="nodetree" menu label="Node tree"></bl-button><span class="name"><input value="Geometry Nodes" aria-label="Node tree name"></span><bl-button flat tone="grey" icon="shield" label="Fake user" style="color:#aaa;--w:19px"></bl-button><bl-button flat tone="grey" icon="copy" label="New node tree" style="--w:19px"></bl-button><bl-button flat tone="grey" icon="cross" label="Unlink" style="--w:19px"></bl-button></bl-group>
${ic('pin','margin-left:9px;color:#999')}<span style="flex:618"></span><bl-group><bl-button flat tone="grey" icon="magnet" label="Snap" style="color:#999"></bl-button></bl-group><bl-group style="margin-left:7px"><bl-button flat tone="blue" icon="overlay" label="Overlays"></bl-button><bl-button flat menu label="Overlay settings"></bl-button></bl-group></header>
<div class="crumbs">${ic('object')}<span>Plane</span>${ic('right','margin:0 7px 0 12px;--size:13px')}${ic('modnodes')}<span>GeometryNodes</span>${ic('right','margin:0 7px 0 12px;--size:13px')}${ic('nodetree')}<span>Geometry Nodes</span></div>
<button class="peek" aria-label="Show toolbar">${ic('right','--size:12px')}</button><button class="peek r" aria-label="Show sidebar">${ic('left','--size:12px')}</button>`);

/* ---------- timeline ---------- */
define('timeline-editor', EDITOR + `
header{height:27px;padding:0 9px 3px 7px}
.menus{margin-right:12px;padding-left:11px}
.field{display:flex;align-items:center;height:20px;background:#545454;padding:0 16px;white-space:nowrap}
.field input{width:30px;text-align:right;flex:1}
.frame{width:73px;justify-content:center;border-radius:4px;margin-right:7px;padding:0}
.frame input{text-align:center;width:60px}
.s{width:90px}.e{width:91px}
.ruler{display:flex;flex:1;padding-right:10px;background:linear-gradient(#1c1c1c 21px,#303030 21px);position:relative}
.lead{width:87px;flex:none;background:linear-gradient(90deg,#0000 16px,#222 16px 17px,#0000 17px 52px,#111 52px 53px,#0000 53px),linear-gradient(90deg,#0004 57px,#0000 57px);margin-top:21px}
.cell{flex:1;display:flex;flex-direction:column;text-align:center;color:#8a8a8a}
.cell span{height:21px;line-height:20px}
.cell i{flex:1;background:linear-gradient(90deg,#222 1px,#0000 1px calc(50% - 1px),#111 calc(50% - 1px) 50%,#0000 50%)}
.cur{position:absolute;left:46px;top:1px;width:23px;height:20px;border-radius:4px;background:#4772b3;color:#fff;text-align:center;line-height:18px}
.cur::before{content:"";position:absolute;left:3px;top:19px;width:17px;height:7px;background:#4772b3;clip-path:polygon(0 0,100% 0,50% 100%)}
.cur::after{content:"";position:absolute;left:10px;top:20px;width:3px;height:20px;background:#4772b3}
.sb{position:absolute;left:10px;right:3px;bottom:3px;height:3px;background:#3d3d3d;border-radius:2px}
.tail{position:absolute;right:0;bottom:0;top:21px;width:57px;background:#0004;border-left:1px solid #000}
.peek{position:absolute;left:0;bottom:4px;width:6px;height:18px;display:flex;align-items:center;justify-content:center;color:#888}
`, `<header><bl-button icon="clock" menu label="Editor type"></bl-button><nav class="menus"><a href="#">View</a><a href="#">Marker</a></nav><bl-button menu>Playback</bl-button><span style="flex:427"></span>
<bl-group><bl-button flat tone="grey" icon="rec" label="Auto keying"></bl-button><bl-button flat tone="dim" menu label="Keying settings" style="--w:20px"></bl-button></bl-group>
<bl-group style="margin-left:6px;--w:19px;">${['first','prevkey','playrev','play','nextkey','last'].map(i => `<bl-button flat tone="grey" icon="${i}" isize="13" label="${i}"></bl-button>`).join('')}</bl-group>
<bl-group style="margin-left:6px;--w:18px"><bl-button flat tone="grey" icon="stepb" isize="13" label="Step back"></bl-button><bl-button flat tone="grey" icon="stepf" isize="13" label="Step forward"></bl-button><bl-button flat menu label="Jump settings"></bl-button></bl-group>
<bl-group style="margin-left:6px"><bl-button flat tone="grey" icon="snap2" label="Snap" style="color:#aaa"></bl-button><bl-button flat menu label="Snap settings"></bl-button></bl-group><span style="flex:323"></span>
<label class="field frame"><input value="1" aria-label="Current frame"></label>
<bl-group><bl-button flat icon="stopwatch" label="Preview range"></bl-button><label class="field s"><span>Start</span><input value="1"></label><label class="field e"><span>End</span><input value="250"></label></bl-group>
<bl-group style="margin-left:12px"><bl-button flat tone="blue" icon="overlay" label="Overlays"></bl-button><bl-button flat menu label="Overlay settings"></bl-button></bl-group></header>
<div class="ruler"><i class="lead"></i>${Array.from({length:21},(_,i) => `<div class="cell"><span>${12*(i+1)}</span><i></i></div>`).join('')}<i class="tail"></i><i class="sb"></i><div class="cur">1</div><button class="peek" aria-label="Show channels">${ic('right','--size:11px')}</button></div>`);

/* ---------- outliner ---------- */
define('outliner-editor', EDITOR + `
:host{background:#282828}
header{height:27px;padding-bottom:3px}
.list{flex:1;background:repeating-linear-gradient(#282828 0 20px,#2b2b2b 20px 40px);display:flex;flex-direction:column}
.it{display:flex;align-items:center;height:20px;flex:none;padding:0 11px 1px 23px;color:#b8b8b8;position:relative}
.it .end{margin-left:auto;display:flex;gap:6px;color:#d9d9d9}
.it button{display:flex}
.c{padding-left:24px;color:#fff}.o{padding-left:44px}
.sel::before{content:"";position:absolute;left:3px;right:2px;top:0;height:18px;border:1px solid #4f74b5;border-radius:2px;background:#334d80}
.sel>*{position:relative}.sel{color:#f0a22e;--bg:#334d80}
.box{display:flex;align-items:center;justify-content:center;width:20px;height:18px;border-radius:4px;margin-right:4px}
.o .box{margin:0 5px 0 1px}
.c .box{background:#3c3c3c;box-shadow:inset 0 0 0 1px #666}.sel .box{background:#566f9f}
input[type=checkbox]{appearance:none;width:11px;height:11px;background:#d9d9d9;border-radius:1px;margin:2px 3px 0 0}
input[type=checkbox]::after{content:"";display:block;width:7px;height:4px;margin:2px;border:solid #222;border-width:0 0 2px 2px;transform:rotate(-45deg)}
.sel .line{position:absolute;left:29px;top:-15px;height:30px;width:1px;background:#555}
`, `<header><bl-button icon="outliner" menu label="Editor type"></bl-button><bl-button icon="layers" menu label="Display mode" style="margin-left:5px"></bl-button><span style="flex:23"></span><bl-search></bl-search><span style="flex:57"></span><bl-button icon="funnel" menu label="Filter"></bl-button><bl-button icon="newcol" tone="grey" label="New collection" style="margin-left:5px"></bl-button></header>
<div class="list"><div class="it">${ic('collection','color:#d9d9d9;margin-right:7px')}<span>Scene Collection</span></div>
<div class="it c"><button aria-label="Collapse">${ic('open','--size:15px;color:#aaa')}</button><span class="box">${ic('collection','color:#e6e6e6;--size:13px')}</span><span>Collection</span><span class="end"><input type="checkbox" checked aria-label="Include collection">${ic('eye')}${ic('camera')}</span></div>
<div class="it o"><button aria-label="Expand">${ic('right','color:#aaa;--size:13px')}</button><span class="box">${ic('tri','color:#c9824b')}</span><span>Circle</span>${ic('mesh','color:#00b48a;margin-left:23px')}<span class="end">${ic('eye')}${ic('camera')}</span></div>
<div class="it o sel"><i class="line"></i><button aria-label="Expand">${ic('right','color:#ccc;--size:13px')}</button><span class="box">${ic('tri','color:#cc8a62')}</span><span>Plane</span>${ic('wrench','color:#5b83dc;margin-left:23px;margin-right:6px')}${ic('mesh','color:#00c79a')}<span class="end">${ic('eye')}${ic('camera')}</span></div></div>`);

/* ---------- properties ---------- */
const TABS = [[['tools','#b4b4b4']],[['render','#b4b4b4'],['output','#b4b4b4'],['layers','#b4b4b4'],['scene','#b4b4b4'],['world','#c0505c']],[['archive','#d9d9d9']],[['object','#c9824b'],['wrenchF','#5b83dc'],['particles','#5b83dc'],['physics','#5b83dc'],['constraint','#5b83dc'],['mesh','#00b48a'],['material','#d9606e']]];
define('properties-editor', EDITOR + `
header{height:25px;padding-bottom:3px}
main{flex:1;display:flex;min-height:0}
.tabs{width:28px;background:#181818;display:flex;flex-direction:column;gap:8px;padding:8px 0 0 2px;flex:none;align-items:stretch}
.tabs div{display:flex;flex-direction:column}
.tabs button{height:28px;background:#1c1c1c;border-radius:4px 0 0 4px;display:flex;align-items:center;justify-content:center;--bg:#1c1c1c}
.tabs .on{background:#303030}
.pane{flex:1;padding:8px 8px 0;min-width:0}
.path{display:flex;align-items:center;gap:9px;height:20px;padding:0 1px 0 3px}
.slots{display:flex;gap:8px;margin:16px 0 5px}
.box{flex:1;height:80px;background:#242424;border:1px solid #3d3d3d;border-radius:4px;display:flex;align-items:flex-end;padding:0 2px 2px 6px}
.box .g{margin:0 auto;color:#d9d9d9}
.side{display:flex;flex-direction:column;width:20px}
.side .pm{display:flex;flex-direction:column;gap:1px;border-radius:4px;overflow:hidden;margin-bottom:6px}
.side .pm button{height:19px;background:#545454;display:flex;align-items:center;justify-content:center}
.side .pm button+button{background:#3f3f3f;color:#777}
.new{display:flex;width:100%;gap:1px}
.new .n{flex:1;height:20px;background:#545454;display:flex;align-items:center;padding-left:6px;border-radius:0 4px 4px 0}
.new .n span{flex:1;text-align:center;padding-right:3px}
.new bl-button{border-radius:4px 0 0 4px;overflow:hidden}
`, `<header><bl-button icon="props" menu label="Editor type" style="margin-left:1px"></bl-button><span style="flex:71"></span><bl-search></bl-search><span style="flex:82"></span><bl-button menu label="Options"></bl-button></header>
<main><nav class="tabs">${TABS.map(g => `<div>${g.map(([n,c]) => `<button aria-label="${n}" class="${n === 'material' ? 'on' : ''}" style="color:${c}">${ic(n)}</button>`).join('')}</div>`).join('')}<div>${ic('down','--size:13px;color:#555;align-self:center')}</div></nav>
<div class="pane"><div class="path">${ic('object')}<span>Plane</span><span class="grow"></span>${ic('pin','color:#8f8f8f')}</div>
<div class="slots"><div class="box">${ic('play2','color:#b4b4b4')}<bl-icon class="g" name="grip"></bl-icon></div><div class="side"><div class="pm"><button aria-label="Add slot">${ic('plus','--size:12px')}</button><button aria-label="Remove slot">${ic('minus')}</button></div><bl-button menu label="Slot specials"></bl-button></div></div>
<div class="new"><bl-button flat icon="material" menu label="Browse material"></bl-button><button class="n">${ic('plus','--size:12px')}<span>New</span></button></div></div></main>`);

/* ---------- whole window ---------- */
define('blender-window', BASE + `
:host{display:flex;flex-direction:column;height:100vh}
.areas{flex:1;display:flex;gap:3px;padding:0 2px;min-height:0}
.left{flex:1;display:flex;flex-direction:column;gap:3px;min-width:0}
.top{flex:469 1 0;display:flex;gap:3px;min-height:0}
spreadsheet-editor{flex:453 1 0}viewport-editor{flex:1118 1 0}
node-editor{flex:416 1 0}timeline-editor{height:69px;flex:none}
.right{width:339px;flex:none;display:flex;flex-direction:column;gap:3px}
outliner-editor{flex:175 1 0}properties-editor{flex:782 1 0}
`, `<title-bar></title-bar><top-bar></top-bar>
<div class="areas"><div class="left"><div class="top"><spreadsheet-editor></spreadsheet-editor><viewport-editor></viewport-editor></div><node-editor></node-editor><timeline-editor></timeline-editor></div>
<div class="right"><outliner-editor></outliner-editor><properties-editor></properties-editor></div></div><status-bar></status-bar>`);
</script>
</body>
</html>
